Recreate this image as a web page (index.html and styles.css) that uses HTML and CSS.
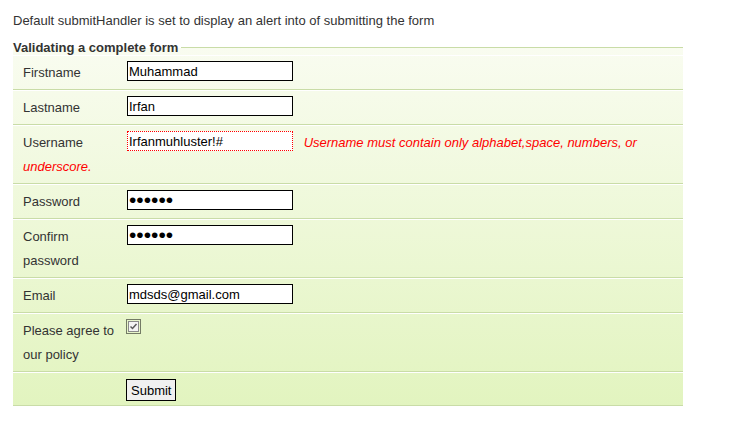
FILE: index.html
```html
<!DOCTYPE html>
<html>
<head>
<meta charset="utf-8" />
<title>Validating a complete form</title>
<link rel="stylesheet" href="styles.css">
</head>
<body>
<p class="intro">Default submitHandler is set to display an alert into of submitting the form</p>
<form class="signup" action="#">
	<fieldset>
		<legend>Validating a complete form</legend>
		<p class="row">
			<label for="firstname">Firstname</label>
			<input id="firstname" type="text" value="Muhammad" />
		</p>
		<p class="row">
			<label for="lastname">Lastname</label>
			<input id="lastname" type="text" value="Irfan" />
		</p>
		<p class="row">
			<label for="username">Username</label>
			<input id="username" class="invalid" type="text" value="Irfanmuhluster!#" />
			<span class="error">Username must contain only alphabet,space, numbers, or underscore.</span>
		</p>
		<p class="row">
			<label for="password">Password</label>
			<input id="password" class="pass" type="password" value="secret" />
		</p>
		<p class="row">
			<label for="confirm">Confirm password</label>
			<input id="confirm" class="pass" type="password" value="secret" />
		</p>
		<p class="row">
			<label for="email">Email</label>
			<input id="email" type="text" value="mdsds@gmail.com" />
		</p>
		<p class="row">
			<label for="agree">Please agree to our policy</label>
			<span class="check" id="agree">
				<svg width="15" height="15" viewBox="0 0 15 15">
					<rect x="0.5" y="0.5" width="14" height="14" fill="none" stroke="#000" stroke-dasharray="1 1" />
					<rect x="2.5" y="2.5" width="10" height="10" fill="#f4f4f4" stroke="#8a8a8a" />
					<polyline points="4.5,7.5 6.5,9.5 10.5,5" fill="none" stroke="#5a5a5a" stroke-width="1.5" />
				</svg>
			</span>
		</p>
		<p class="row actions">
			<button type="submit">Submit</button>
		</p>
	</fieldset>
</form>
</body>
</html>
```

FILE: styles.css
```css
*{ margin:0; padding:0;}
body{ font:13px/15px "Liberation Sans", Arial, sans-serif; color:#333; background:#fff;}
.intro{ margin:13px 13px 12px;}
.signup fieldset{ width:670px; margin-left:13px; padding:0; border:0; border-top:1px solid #c9dca7; background:linear-gradient(#f9fcf0, #e2f4bf);}
.signup legend{ padding:0 3px 0 0; font-weight:bold; color:#333;}
.row{ padding:5px 0 4px 10px; line-height:24px; border-top:1px solid #fff; border-bottom:1px solid #c9dca7;}
.row:after{ content:''; display:block; clear:both;}
.row label{ float:left; width:100px;}
.row input{ width:166px; height:20px; margin:0 0 0 4px; padding:0 1px; border:1px solid #000; box-sizing:border-box; vertical-align:top; font:13px "Liberation Sans", Arial, sans-serif; color:#000; background:#fff; outline:none;}
.row input.invalid{ border:1px dotted #f00;}
.row input.pass{ font-size:21px; letter-spacing:0;}
.error{ padding-left:7px; font-style:italic; color:#f00;}
.check{ display:inline-block; width:15px; height:15px; margin:0 0 0 3px; vertical-align:top;}
.check svg{ display:block;}
.actions{ padding-left:113px; padding-bottom:3px;}
.actions button{ height:22px; padding:0 4px; margin-top:1px; border:1px solid #000; background:#f0f0f0; font:13px "Liberation Sans", Arial, sans-serif; color:#000; vertical-align:top;}
```
